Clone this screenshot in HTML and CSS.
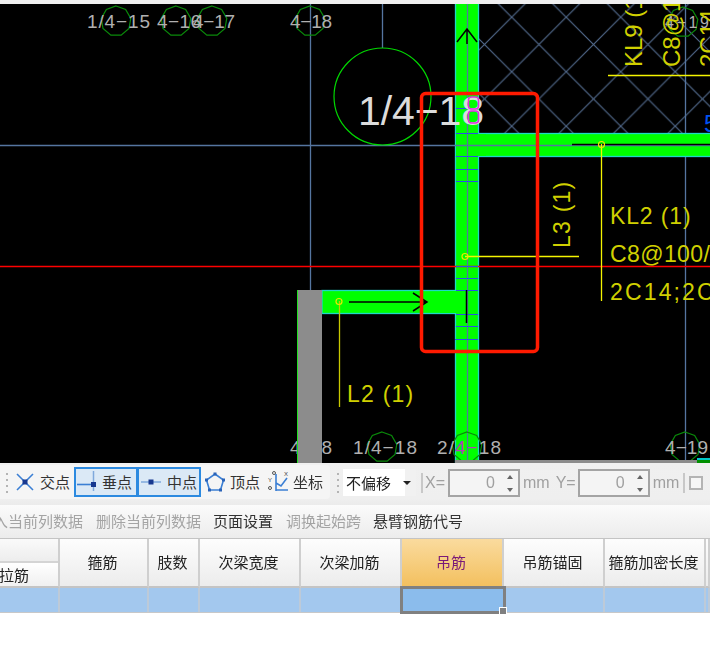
FILE: index.html
```html
<!DOCTYPE html>
<html lang="zh-CN">

<head>
  <meta charset="UTF-8" />
  <title>梁平法输入</title>
  <link rel="stylesheet" href="styles.css">
</head>

<body>
  <div class="top-strip"></div>

  <!-- CAD drawing: every item sits at its drawing coordinate -->
  <svg class="cad" width="710" height="459" viewBox="0 4 710 459">
    <defs>
      <pattern id="hatch" patternUnits="userSpaceOnUse" x="511.7" y="71.7" width="54.5" height="54.5">
        <path d="M0 0L54.5 54.5M54.5 0L0 54.5" class="hatch-line" />
      </pattern>
      <polygon id="axis" class="axis-ring" points="0,-15 9.64,-11.49 14.77,-2.6 13,7.5 5.13,14.1 -5.13,14.1 -13,7.5 -14.77,-2.6 -9.64,-11.49" />
    </defs>

    <rect x="0" y="4" width="710" height="459" fill="#000" />
    <rect x="479" y="4" width="231" height="129" fill="url(#hatch)" />

    <!-- grid lines -->
    <path class="grid" d="M0 145.5H710M310.5 4V290M382.5 4V48M685.5 4V463" />

    <!-- beams -->
    <rect class="beam" x="455.5" y="3" width="23" height="461" />
    <rect class="beam" x="479" y="133.5" width="232" height="23" />
    <rect class="beam" x="322" y="290.5" width="133" height="23" />
    <rect class="beam-fill" x="456" y="134" width="30" height="22" />
    <rect class="beam-fill" x="440" y="291" width="24" height="22" />

    <path class="red-axis" d="M0 266.5H710" />
    <path class="grid" d="M467.5 4V463M455 145.5H710" />

    <!-- stirrup ticks -->
    <path class="ticks" d="M456 108.5H478M456 133.5H478M456 156.5H478M456 169.5H478M456 181.5H478M456 266.5H478M456 278.5H478M456 290.5H478M456 314.5H478M456 326.5H478M455 339.5H478" />

    <!-- beam direction arrows -->
    <path class="arrow" d="M457 42L467 29L477 42M467 29V44" />
    <path class="arrow" d="M349 302H427M413 293L427 302L413 311M466.5 290V323" />
    <path class="arrow" d="M572 144.5H710" />

    <!-- axis bubbles -->
    <use href="#axis" x="116" y="21" />
    <use href="#axis" x="176" y="21" />
    <use href="#axis" x="212" y="21" />
    <use href="#axis" x="310" y="21" />
    <use href="#axis" x="683" y="22" />
    <use href="#axis" x="382" y="447" />
    <use href="#axis" x="467" y="447" />
    <use href="#axis" x="685" y="447" />
    <circle class="axis-big" cx="382.5" cy="96.5" r="48.5" />

    <text class="axis-text" x="87" y="28" textLength="63">1/4−15</text>
    <text class="axis-text" x="157" y="28" textLength="44">4−16</text>
    <text class="axis-text" x="193" y="28" textLength="42">4−17</text>
    <text class="axis-text" x="290" y="28" textLength="42">4−18</text>
    <text class="axis-text small" x="665" y="28" textLength="44">4−19</text>
    <text class="axis-text" x="290" y="454" textLength="42">4−18</text>
    <text class="axis-text" x="353" y="454" textLength="64">1/4−18</text>
    <text class="axis-text" x="437" y="454" textLength="64">2/<tspan class="axis-pink">4−</tspan>18</text>
    <text class="axis-text" x="665" y="454" textLength="43">4−19</text>
    <text class="axis-title" x="358" y="125" textLength="126">1/4−18</text>

    <!-- wall column -->
    <rect class="column" x="297.5" y="290" width="24.5" height="174" />
    <path class="column-edge" d="M297.5 290V463" />

    <!-- bottom edge of the floor -->
    <rect x="455" y="460" width="242" height="3" fill="#8c8c8c" />
    <rect x="697" y="458" width="13" height="2" fill="#00c8c8" />
    <rect x="697" y="460" width="13" height="3" fill="#009000" />

    <!-- leaders and labels -->
    <path class="leader" d="M608 75.5H710M601.5 144V301M465 256.5H579" />
    <path class="leader dim" d="M339.5 301V407" />
    <circle class="pick" cx="601.5" cy="144.5" r="3" />
    <circle class="pick" cx="465" cy="256.5" r="3" />
    <circle class="pick" cx="339" cy="301.5" r="3" />

    <rect class="marker" x="468.5" y="97" width="10" height="12" rx="3" />
    <rect class="marker" x="468.5" y="111" width="10" height="12" rx="3" />

    <text class="label" transform="translate(610 224) scale(.96 1)" textLength="84">KL2 (1)</text>
    <text class="label" transform="translate(610 262) scale(.96 1)" textLength="104">C8@100/</text>
    <text class="label" transform="translate(610 300) scale(.96 1)" textLength="108">2C14;2C</text>
    <text class="label" transform="translate(347 402) scale(.96 1)" textLength="69">L2 (1)</text>
    <text class="label" transform="translate(570 248) rotate(-90) scale(.96 1)" textLength="69">L3 (1)</text>
    <text class="label" transform="translate(642 67) rotate(-90)">KL9 (1)</text>
    <text class="label" transform="translate(680 67) rotate(-90)">C8@100</text>
    <text class="label" transform="translate(717 67) rotate(-90)">2C14</text>
    <text class="label-blue" x="704" y="132">5</text>

    <!-- marked region -->
    <rect class="callout" x="421.5" y="93.5" width="116" height="258" rx="4" />
  </svg>

  <div class="snapbar">
    <div class="snap-group">
      <span class="grip"></span>
      <div class="tool">
        <svg class="tool-icon" width="20" height="20" viewBox="0 0 20 20">
          <path class="icon-line" d="M2 2L18 18M18 2L2 18" />
          <rect class="icon-dot" x="7.5" y="7.5" width="5" height="5" />
        </svg>
        <span>交点</span>
      </div>
      <div class="tool on">
        <svg class="tool-icon" width="20" height="24" viewBox="0 0 20 24">
          <path class="icon-soft" d="M16.5 1V21" />
          <path class="icon-line" d="M0 14.5H17" />
          <rect class="icon-dot" x="14" y="12" width="5" height="5" />
        </svg>
        <span>垂点</span>
      </div>
      <div class="tool on mid">
        <svg class="tool-icon" width="20" height="20" viewBox="0 0 20 20">
          <path class="icon-soft" d="M0 10H20" />
          <rect class="icon-dot" x="7.5" y="7.5" width="5" height="5" />
        </svg>
        <span>中点</span>
      </div>
      <div class="tool">
        <svg class="tool-icon" width="20" height="20" viewBox="0 0 20 20">
          <path class="icon-line" d="M10 2L18.5 8L15.5 18H4.5L1.5 8Z" />
          <g class="icon-corner">
            <rect x="8.5" y="0.5" width="3" height="3" />
            <rect x="17" y="6.5" width="3" height="3" />
            <rect x="14" y="16.5" width="3" height="3" />
            <rect x="3" y="16.5" width="3" height="3" />
            <rect x="0" y="6.5" width="3" height="3" />
          </g>
        </svg>
        <span>顶点</span>
      </div>
      <div class="tool coord">
        <svg class="tool-icon" width="21" height="22" viewBox="0 0 21 22">
          <text class="icon-letter" x="0" y="11">Y</text>
          <text class="icon-letter" x="16" y="5">X</text>
          <circle class="icon-ring" cx="6" cy="2" r="1.5" />
          <circle class="icon-ring" cx="2" cy="17" r="1.5" />
          <path class="icon-line" d="M8 3V20M8 19H20M8 12L13 15L19 7" />
        </svg>
        <span>坐标</span>
      </div>
    </div>

    <span class="grip second"></span>
    <div class="combo">
      <span>不偏移</span>
      <span class="combo-arrow"></span>
    </div>
    <span class="sep"></span>
    <span class="field-label">X=</span>
    <div class="spin">
      <span class="spin-value">0</span>
      <span class="spin-btns"><i class="up"></i><i class="down"></i></span>
    </div>
    <span class="field-label mm">mm</span>
    <span class="field-label y">Y=</span>
    <div class="spin">
      <span class="spin-value">0</span>
      <span class="spin-btns"><i class="up"></i><i class="down"></i></span>
    </div>
    <span class="field-label mm">mm</span>
    <span class="sep last"></span>
    <span class="check"></span>
  </div>

  <div class="menubar">
    <span class="muted wide">入当前列数据</span>
    <span class="muted">删除当前列数据</span>
    <span class="wide">页面设置</span>
    <span class="muted">调换起始跨</span>
    <span>悬臂钢筋代号</span>
  </div>

  <div class="sheet">
    <div class="head first">
      <div class="head-top"></div>
      <div class="head-sub">拉筋</div>
    </div>
    <div class="head">箍筋</div>
    <div class="head">肢数</div>
    <div class="head">次梁宽度</div>
    <div class="head">次梁加筋</div>
    <div class="head active">吊筋</div>
    <div class="head">吊筋锚固</div>
    <div class="head">箍筋加密长度</div>
    <div class="head"></div>

    <div class="cell"></div>
    <div class="cell"></div>
    <div class="cell"></div>
    <div class="cell"></div>
    <div class="cell"></div>
    <div class="cell selected"></div>
    <div class="cell"></div>
    <div class="cell"></div>
    <div class="cell"></div>
  </div>
</body>

</html>
```

FILE: styles.css
```css
* {
  margin: 0;
  padding: 0;
  box-sizing: border-box;
}

body {
  width: 710px;
  height: 647px;
  overflow: hidden;
  background: #ffffff;
  font-family: "Noto Sans CJK SC", "Liberation Sans", sans-serif;
  font-size: 15px;
  color: #222;
  filter: blur(0.35px);
}

.top-strip {
  height: 4px;
  background: #efefef;
}

/* CAD drawing */
.cad {
  display: block;
  font-family: "Liberation Sans", sans-serif;
}

.hatch-line {
  fill: none;
  stroke: #50688a;
  stroke-width: 1.2;
}

.grid {
  fill: none;
  stroke: #5575a0;
  stroke-width: 1.3;
}

.red-axis {
  stroke: #ff0000;
  stroke-width: 1.3;
}

.beam {
  fill: #00ff00;
  stroke: #1ed8c8;
  stroke-width: 1.3;
}

.beam-fill {
  fill: #00ff00;
}

.ticks {
  stroke: #2a50e8;
  stroke-width: 1.2;
}

.arrow {
  fill: none;
  stroke: #000;
  stroke-width: 1.5;
}

.axis-ring {
  fill: none;
  stroke: #0a8a0a;
  stroke-width: 1.2;
}

.axis-big {
  fill: none;
  stroke: #00d800;
  stroke-width: 1.2;
}

.axis-text {
  fill: #b0b0b0;
  font-size: 19px;
}

.axis-text.small {
  font-size: 16px;
}

.axis-pink {
  fill: #b040b8;
}

.axis-title {
  fill: #dcdcdc;
  font-size: 41px;
}

.column {
  fill: #8c8c8c;
}

.column-edge {
  stroke: #22e022;
  stroke-width: 1;
}

.leader {
  fill: none;
  stroke: #f4f400;
  stroke-width: 1.3;
}

.leader.dim {
  stroke: #c8c800;
}

.pick {
  fill: none;
  stroke: #e8e800;
  stroke-width: 1.2;
}

.marker {
  fill: none;
  stroke: #e030e0;
  stroke-width: 1.5;
}

.label {
  fill: #d0d000;
  font-size: 24px;
}

.label-blue {
  fill: #0050f0;
  font-size: 24px;
}

.callout {
  fill: none;
  stroke: #ff1a00;
  stroke-width: 3.5;
}

/* snap toolbar */
.snapbar {
  display: flex;
  align-items: center;
  height: 42px;
  background: linear-gradient(#f0f0f0, #efefef 85%, #ebebeb);
  padding-bottom: 5px;
}

.snap-group {
  display: flex;
  align-items: center;
  width: 330px;
  height: 34px;
  padding-left: 5px;
  background: #f5f5f5;
  border-radius: 0 4px 4px 0;
}

.grip {
  width: 4px;
  height: 22px;
  flex: none;
  background: radial-gradient(circle at center, #b4b4b4 1.3px, transparent 1.5px) 0 0 / 4px 6px;
}

.grip.second {
  margin-left: 6px;
}

.tool {
  display: flex;
  align-items: center;
  gap: 5px;
  height: 30px;
  padding: 0 4px;
  font-size: 15px;
  white-space: nowrap;
  color: #333;
}

.tool.coord {
  gap: 4px;
}

.tool:first-of-type {
  margin-left: 2px;
}

.tool.on {
  background: #dbe9f6;
  border: 2px solid #2c8ae0;
  padding: 0 1px;
  width: 64px;
}

.tool.on + .tool.on {
  margin-left: -1px;
}

.tool.mid {
  padding-left: 2px;
  gap: 6px;
}

.tool-icon {
  display: block;
  flex: none;
  overflow: visible;
}

.icon-line {
  fill: none;
  stroke: #3b7fd4;
  stroke-width: 1.6;
}

.icon-soft {
  fill: none;
  stroke: #7fa9dc;
  stroke-width: 1.5;
}

.icon-dot {
  fill: #17388f;
}

.icon-corner rect {
  fill: #2a63b8;
}

.icon-letter {
  font-family: "Liberation Sans", sans-serif;
  font-size: 6px;
  fill: #444;
}

.icon-ring {
  fill: none;
  stroke: #555;
  stroke-width: 1;
}

.combo {
  display: flex;
  align-items: center;
  justify-content: space-between;
  width: 73px;
  height: 27px;
  margin: 2px 0 0 3px;
  padding: 0 5px 0 3px;
  background: linear-gradient(90deg, #fff 62px, #f1f1f1 62px);
  font-size: 15px;
  color: #222;
}

.combo-arrow {
  width: 0;
  height: 0;
  border-left: 4px solid transparent;
  border-right: 4px solid transparent;
  border-top: 4px solid #222;
}

.sep {
  width: 2px;
  height: 20px;
  margin: 3px 2px 0 5px;
  background: #c8c8c8;
}

.sep.last {
  margin: 3px 4px 0 4px;
}

.field-label {
  font-family: "Liberation Sans", sans-serif;
  font-size: 16px;
  margin-top: 3px;
  color: #a0a0a0;
  white-space: nowrap;
}

.field-label.mm {
  margin-left: 3px;
}

.field-label.y {
  margin-left: 6px;
  margin-right: -1px;
}

.spin {
  display: flex;
  align-items: center;
  justify-content: flex-end;
  width: 72px;
  height: 28px;
  margin: 3px 0 0 3px;
  border: 2px solid #a4a4a4;
  background: #f4f4f4;
  font-family: "Liberation Sans", sans-serif;
  color: #a0a0a0;
}

.spin-value {
  font-size: 16px;
  margin-right: 12px;
}

.spin-btns {
  display: flex;
  flex-direction: column;
  gap: 9px;
  margin-right: 5px;
}

.spin-btns i {
  display: block;
  width: 0;
  height: 0;
  border-left: 3.5px solid transparent;
  border-right: 3.5px solid transparent;
}

.spin-btns .up {
  border-bottom: 4px solid #666;
}

.spin-btns .down {
  border-top: 4px solid #666;
}

.check {
  width: 14px;
  height: 14px;
  margin-top: 3px;
  border: 2px solid #b4b4b4;
  background: #f6f6f6;
}

/* command row */
.menubar {
  display: flex;
  align-items: center;
  gap: 12px;
  height: 33px;
  margin-left: -7px;
  padding-bottom: 3px;
  background: linear-gradient(#fbfbfb, #ececec);
  white-space: nowrap;
  font-size: 15px;
  color: #333;
}

.menubar .wide {
  margin-right: 1px;
}

.menubar .muted {
  color: #a4a4a4;
}

/* table */
.sheet {
  display: grid;
  grid-template-columns: 60px 89px 51px 101px 101px 102px 101px 101px 4px;
  grid-template-rows: 49px 24px;
  border-top: 1px solid #c4c4c4;
  border-bottom: 1px solid #c8c8c8;
}

.head {
  display: flex;
  align-items: center;
  justify-content: center;
  padding: 0 2px 2px 0;
  background: linear-gradient(#fdfdfd, #ececec);
  border-right: 2px solid #cfcfcf;
  border-bottom: 2px solid #c4c4c4;
  font-size: 15px;
  color: #222;
  white-space: nowrap;
}

.head.first {
  display: flex;
  flex-direction: column;
  align-items: stretch;
  padding: 0;
}

.head-top {
  height: 24px;
  background: linear-gradient(#fafafa, #ededed);
  border-bottom: 2px solid #d4d4d4;
}

.head-sub {
  flex: 1;
  line-height: 23px;
  background: linear-gradient(#ffffff, #f0f0f0);
  margin-left: -1px;
}

.head.active {
  background: linear-gradient(#fadb9e, #f3c05f);
  color: #7a1a78;
}

.cell {
  background: #a3c8ee;
  border-right: 2px solid #bdcad8;
}

.cell.selected {
  position: relative;
  background: #8bbcec;
  outline: 3px solid #808080;
  outline-offset: -1px;
  border-right: 0;
}

.cell.selected::after {
  content: "";
  position: absolute;
  right: -3px;
  bottom: -3px;
  width: 6px;
  height: 6px;
  background: #808080;
  border: 1px solid #ffffff;
}
```
